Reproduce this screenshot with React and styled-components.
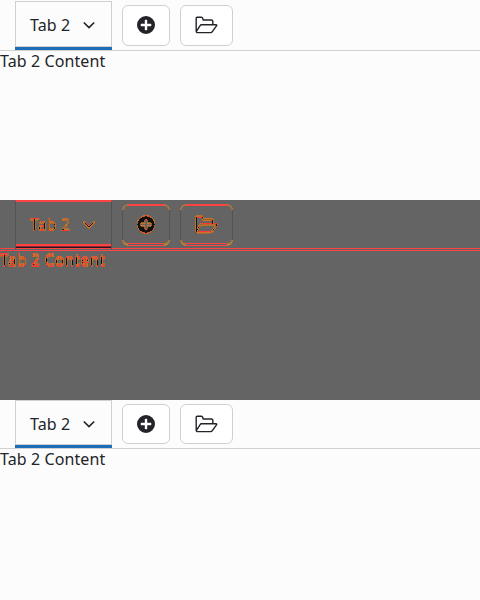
import React from "react";
import styled, { createGlobalStyle, css } from "styled-components";

const GlobalStyle = createGlobalStyle`
  * { box-sizing: border-box; }
  body {
    margin: 0;
    background: #fcfcfc;
    color: #222429;
    font: 16px/24px "Noto Sans", sans-serif;
    letter-spacing: .1px;
  }
`;

const ink = { before: "#222429", diff: "#111111", after: "#222429" };

const Stack = styled.main`
  display: grid;
  grid-template-rows: repeat(3, 200px);
  width: 480px;
  height: 600px;
  overflow: hidden;
`;

const Panel = styled.section`
  background: ${(p) => (p.$mode === "diff" ? "#646464" : "#fcfcfc")};
  color: ${(p) => ink[p.$mode]};
  overflow: hidden;
`;

const TabBar = styled.header`
  display: flex;
  align-items: flex-start;
  height: ${(p) => (p.$mode === "after" ? 49 : 51)}px;
  padding: ${(p) => (p.$mode === "before" ? 1 : 0)}px 0 0 15px;
  border-bottom: 1px solid #d0d0d0;
  ${(p) => p.$mode === "diff" && css`
    border-bottom-color: #ff4242;
    background: linear-gradient(#ff4242, #ff4242) 0 48px / 100% 1px no-repeat;
  `}
`;

const Tab = styled.button`
  display: flex;
  align-items: center;
  width: 97px;
  height: ${(p) => (p.$mode === "after" ? 48 : 49)}px;
  margin: 0 10px 0 0;
  padding: 0 14px ${(p) => (p.$mode === "diff" ? 1 : 2)}px;
  gap: 11px;
  border: 1px solid transparent;
  border-bottom: 0;
  background:
    linear-gradient(#1c6fb7, #1c6fb7) bottom / 100% 3px no-repeat border-box,
    linear-gradient(#d0d0d0, #d0d0d0) 0 calc(100% - 3px) / 100% 1px no-repeat border-box,
    linear-gradient(#d0d0d0, #d0d0d0) top / 100% 1px no-repeat border-box,
    linear-gradient(#d0d0d0, #d0d0d0) left / 1px 100% no-repeat border-box,
    linear-gradient(#d0d0d0, #d0d0d0) right / 1px 100% no-repeat border-box;
  color: inherit;
  font: inherit;
  letter-spacing: inherit;
  ${(p) => p.$mode === "diff" && css`
    border-color: #535353;
    border-top: 2px solid #ff4242;
    background: none;
    box-shadow: inset 0 -1px #ff4242, inset 0 -2px #2a1420, inset 0 -3px #8c2a30, inset 0 -5px #ff4242;
  `}
`;

const ToolButton = styled.button`
  display: flex;
  align-items: center;
  justify-content: center;
  flex: none;
  position: relative;
  width: ${(p) => p.$width}px;
  height: ${(p) => (p.$mode === "before" ? 41 : p.$mode === "diff" ? 42 : 40)}px;
  margin: 4px 10px 0 0;
  padding: 0 0 ${(p) => (p.$mode === "after" ? 0 : 1)}px;
  border: 1px solid #d0d0d0;
  border-radius: 6px;
  background: #fff;
  color: inherit;
  ${(p) => p.$mode === "diff" && css`
    border: 0;
    border-radius: 0;
    background:
      linear-gradient(#ff4242, #ff4242) 6px 0 / calc(100% - 12px) 2px no-repeat,
      linear-gradient(#ff4242, #ff4242) 6px 39px / calc(100% - 12px) 1px no-repeat,
      linear-gradient(#ff4242, #ff4242) 6px 41px / calc(100% - 12px) 1px no-repeat,
      linear-gradient(#535353, #535353) 0 6px / 1px 30px no-repeat,
      linear-gradient(#535353, #535353) right 6px / 1px 30px no-repeat;
    &::before {
      content: "";
      position: absolute;
      inset: 0;
      border: 1px solid #c98032;
      border-bottom-width: 2px;
      border-radius: 6px;
      box-shadow: inset 0 0 0 1px rgba(201, 128, 50, .55);
      mask:
        linear-gradient(#000, #000) 0 0 / 6px 6px no-repeat,
        linear-gradient(#000, #000) 100% 0 / 6px 6px no-repeat,
        linear-gradient(#000, #000) 0 100% / 6px 6px no-repeat,
        linear-gradient(#000, #000) 100% 100% / 6px 6px no-repeat;
    }
  `}
`;

const Label = styled.span`
  white-space: nowrap;
  ${(p) => p.$mode === "diff" && css`filter: url(#change-one);`}
`;

const Content = styled.div`
  height: 24px;
  margin-top: -2px;
  ${(p) => p.$mode === "diff" && css`filter: url(#change-two);`}
`;

const Icon = styled.svg`
  display: block;
  flex: none;
  overflow: visible;
  ${(p) => p.$mode === "diff" && css`filter: url(#change-one);`}
`;

const FilterDefs = styled.svg`
  position: absolute;
`;

function ChangeFilter({ id, shift }) {
  return (
    <filter id={id} x="-10%" y="-20%" width="120%" height="140%" colorInterpolationFilters="sRGB">
      <feOffset in="SourceAlpha" dy={-shift} result="moved" />
      <feComposite in="SourceAlpha" in2="moved" operator="xor" result="changed" />
      <feColorMatrix in="changed" values="0 0 0 1 0  0 0 0 -1 1  0 0 0 -1 1  0 0 0 1 0" />
      <feComponentTransfer result="marks">
        <feFuncR type="discrete" tableValues=".78 .78 .78 .78 1" />
        <feFuncG type="discrete" tableValues=".22 .46 .46 .46 .46" />
        <feFuncB type="discrete" tableValues=".2 .18 .18 .18 .18" />
        <feFuncA type="discrete" tableValues="0 .7 .9 1 1" />
      </feComponentTransfer>
      <feMerge>
        <feMergeNode in="SourceGraphic" />
        <feMergeNode in="marks" />
      </feMerge>
    </filter>
  );
}

function View({ mode }) {
  return (
    <Panel $mode={mode}>
      <TabBar $mode={mode}>
        <Tab $mode={mode}>
          <Label $mode={mode}>Tab 2</Label>
          <Icon $mode={mode} width="16" height="16" viewBox="0 0 16 16" fill="none" stroke="currentColor" strokeWidth="1.7">
            <path d="m2.8 5.5 5.2 5 5.2-5" />
          </Icon>
        </Tab>
        <ToolButton $mode={mode} $width={48} aria-label="Add tab">
          <Icon $mode={mode} width="18" height="18" viewBox="0 0 18 18">
            <path fill="currentColor" fillRule="evenodd" d="M9 0a9 9 0 1 1 0 18A9 9 0 0 1 9 0ZM8.5 3.7Q7.8 3.7 7.8 4.4V7.8H4.4Q3.7 7.8 3.7 8.5V9.5Q3.7 10.2 4.4 10.2H7.8V13.6Q7.8 14.3 8.5 14.3H9.5Q10.2 14.3 10.2 13.6V10.2H13.6Q14.3 10.2 14.3 9.5V8.5Q14.3 7.8 13.6 7.8H10.2V4.4Q10.2 3.7 9.5 3.7Z" />
          </Icon>
        </ToolButton>
        <ToolButton $mode={mode} $width={53} aria-label="Open folder">
          <Icon $mode={mode} width="23" height="18" viewBox="0 0 23 18" fill="none" stroke="currentColor" strokeWidth="1.4" strokeLinejoin="round">
            <path d="M1.2 15.8V2.2Q1.2 1.2 2.2 1.2H6.4Q7.4 1.2 7.7 2.3L8.2 4H16.5Q17.6 4 17.8 5V8.4M6.4 8.7H20.9Q22.3 8.7 21.5 9.8L17.3 15.7Q16.7 16.6 15.7 16.6H2Q.9 16.4 1.6 15.2L5.1 9.6Q5.6 8.7 6.4 8.7Z" />
          </Icon>
        </ToolButton>
      </TabBar>
      <Content $mode={mode}>Tab 2 Content</Content>
    </Panel>
  );
}

export default function App() {
  return (
    <>
      <GlobalStyle />
      <FilterDefs width="0" height="0" aria-hidden="true">
        <defs>
          <ChangeFilter id="change-one" shift={1} />
          <ChangeFilter id="change-two" shift={2} />
        </defs>
      </FilterDefs>
      <Stack>
        <View mode="before" />
        <View mode="diff" />
        <View mode="after" />
      </Stack>
    </>
  );
}
